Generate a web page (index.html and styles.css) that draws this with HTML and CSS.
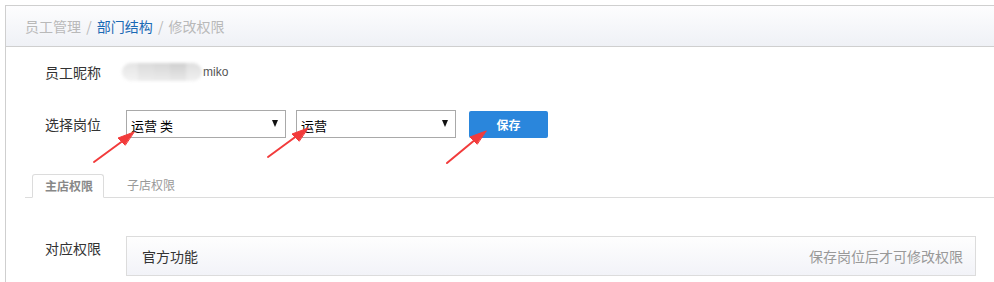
FILE: index.html
```html
<!DOCTYPE html>
<html lang="zh-CN">
<head>
<meta charset="utf-8">
<title>修改权限</title>
<link rel="stylesheet" href="styles.css">
</head>
<body>
<div class="page">
  <div class="panel">
    <div class="crumbs">
      <span class="crumb-muted">员工管理</span>
      <span class="sep">/</span>
      <span class="crumb-link">部门结构</span>
      <span class="sep">/</span>
      <span class="crumb-muted">修改权限</span>
    </div>
    <div class="form">
      <div class="row row-name">
        <div class="label">员工昵称</div>
        <div class="name">
          <span class="blur"><i class="b1"></i><i class="b2"></i><i class="b3"></i><i class="b4"></i><i class="b5"></i></span>
          <span class="nick">miko</span>
        </div>
      </div>
      <div class="row row-post">
        <div class="label">选择岗位</div>
        <div class="select"><span>运营 类</span><span class="caret"></span></div>
        <div class="select select-2"><span>运营</span><span class="caret"></span></div>
        <button class="btn">保存</button>
      </div>
    </div>
    <div class="tabs">
      <div class="tab active">主店权限</div>
      <div class="tab">子店权限</div>
    </div>
    <div class="form">
      <div class="row row-perm">
        <div class="label label-top">对应权限</div>
        <div class="perm-box">
          <span class="perm-title">官方功能</span>
          <span class="perm-note">保存岗位后才可修改权限</span>
        </div>
      </div>
    </div>
  </div>
  <svg class="arrows" width="994" height="282" viewBox="0 0 994 282">
    <g stroke="#f23b3b" stroke-width="2" fill="#f23b3b" stroke-linecap="round">
      <line x1="94" y1="162" x2="124" y2="140"/>
      <polygon points="134,132 118,138 125,145" stroke-width="1"/>
      <line x1="268" y1="157" x2="298" y2="135"/>
      <polygon points="308,128 292,134 299,141" stroke-width="1"/>
      <line x1="447" y1="163" x2="476" y2="139"/>
      <polygon points="486,131 470,137 477,144" stroke-width="1"/>
    </g>
  </svg>
</div>
</body>
</html>
```
FILE: styles.css
```css
* { box-sizing: border-box; }
html, body { margin: 0; padding: 0; background: #fff; }
body {
  font-family: "Noto Sans CJK SC", "Microsoft YaHei", sans-serif;
  font-size: 14px;
  color: #333;
  width: 994px;
  height: 282px;
  overflow: hidden;
}
.page {
  position: relative;
  padding: 5px 0 0 5px;
  height: 282px;
}
.panel {
  border-left: 1px solid #cfcfcf;
  border-top: 1px solid #cfcfcf;
  height: 100%;
}
.crumbs {
  height: 41px;
  border-bottom: 1px solid #cfcfcf;
  background: linear-gradient(#fdfdfe, #eff1f6);
  padding-left: 19px;
  line-height: 40px;
  font-size: 14px;
  color: #b9b9b9;
}
.crumb-link { color: #1b6ab5; }
.sep { margin: 0 2px; }
.form { padding-left: 39px; }
.row { display: flex; align-items: center; }
.label { width: 81px; flex: none; font-size: 14px; color: #333; }
.row-name { margin-top: 13px; height: 24px; }
.name { display: flex; align-items: center; margin-left: -4px; }
.blur {
  display: flex;
  width: 80px;
  height: 18px;
  border-radius: 9px;
  overflow: hidden;
  filter: blur(1.5px);
}
.blur i { flex: 1; display: block; }
.b1 { background: linear-gradient(#e4e4e4, #f3f3f3); }
.b2 { background: linear-gradient(#dadada, #ededed); }
.b3 { background: linear-gradient(#d6d6d6, #ececec); }
.b4 { background: linear-gradient(#cfcfcf, #e9e9e9); }
.b5 { background: linear-gradient(#dedede, #f0f0f0); }
.nick { font-family: "Liberation Sans", Arial, sans-serif; font-size: 12px; color: #555; margin-left: 1px; }
.row-post { margin-top: 26px; height: 28px; }
.select {
  width: 160px;
  height: 28px;
  border: 1px solid #a9a9a9;
  display: flex;
  align-items: center;
  justify-content: space-between;
  padding: 2px 7px 0 4px;
  font-size: 13px;
  color: #000;
  background: #fff;
}
.caret {
  width: 0;
  height: 0;
  border-left: 3.5px solid transparent;
  border-right: 3.5px solid transparent;
  border-top: 7px solid #111;
  margin-top: -3px;
}
.select-2 { margin-left: 10px; }
.btn {
  margin-left: 13px;
  width: 79px;
  height: 27px;
  border: none;
  border-radius: 2px;
  background: #2a86dc;
  color: #fff;
  font-family: "Noto Sans CJK SC", sans-serif;
  font-weight: bold;
  font-size: 12px;
  padding: 0;
}
.tabs {
  margin: 36px 0 0 19px;
  border-bottom: 1px solid #dcdcdc;
  display: flex;
  height: 24px;
  padding-left: 7px;
}
.tab {
  height: 24px;
  padding: 0 12px;
  font-size: 12px;
  color: #999;
  line-height: 22px;
  margin-right: 11px;
}
.tab.active {
  border: 1px solid #dcdcdc;
  border-bottom: 1px solid #fff;
  border-radius: 3px 3px 0 0;
  background: #fff;
  color: #888;
  font-weight: bold;
  width: 72px;
  height: 24px;
  padding: 0 0 0 12px;
}
.row-perm { margin-top: 38px; align-items: flex-start; }
.label-top { margin-top: 2px; }
.perm-box {
  width: 850px;
  height: 40px;
  border: 1px solid #dcdcdc;
  background: linear-gradient(#fefefe, #f2f3f8);
  display: flex;
  align-items: center;
  justify-content: space-between;
  padding: 0 12px 0 15px;
}
.perm-title { font-size: 14px; color: #333; }
.perm-note { font-size: 14px; color: #999; }
.arrows {
  position: absolute;
  left: 0;
  top: 0;
  pointer-events: none;
}
```
